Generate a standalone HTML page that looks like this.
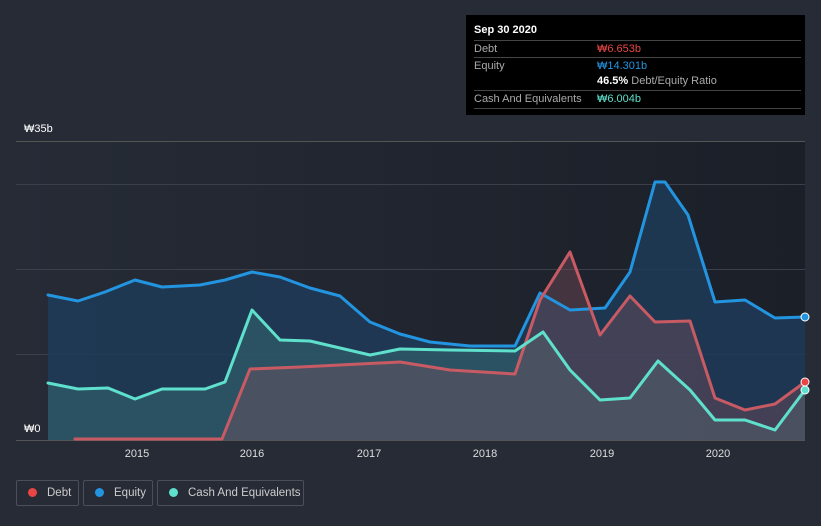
<!DOCTYPE html>
<html><head><meta charset="utf-8"><style>
html,body{margin:0;width:821px;height:526px;overflow:hidden}
body{background:#262b36;font-family:"Liberation Sans",sans-serif;position:relative}
.tip{position:absolute;left:466px;top:15px;width:339px;height:100px;background:#000;color:#fff;font-size:11px}
.tip .r{position:absolute;left:8px;right:4px;border-top:1px solid #444;height:17px;line-height:17px;color:#aaa;white-space:nowrap}
.leg{position:absolute;top:480px;height:26px;border:1px solid #4a4f5a;border-radius:2px;color:#ccc;font-size:11.5px;line-height:24px;box-sizing:border-box;white-space:nowrap;overflow:hidden}
.leg i{display:inline-block;width:9px;height:9px;border-radius:50%;margin:0 10px 0 11px;vertical-align:-1px}
</style></head><body>
<svg width="821" height="526" style="position:absolute;left:0;top:0">
<defs><linearGradient id="bg" x1="0" x2="1"><stop offset="0" stop-color="#262b36"/><stop offset="1" stop-color="#1b1f28"/></linearGradient></defs>
<rect x="16" y="141" width="789" height="299" fill="url(#bg)"/>
<g stroke="#3a3f4a" stroke-width="1"><line x1="16" y1="141.5" x2="805" y2="141.5" stroke="#555"/><line x1="16" y1="184.5" x2="805" y2="184.5"/><line x1="16" y1="269.5" x2="805" y2="269.5"/><line x1="16" y1="354.5" x2="805" y2="354.5"/><line x1="16" y1="440.5" x2="805" y2="440.5" stroke="#555"/></g>
<polygon fill="#1f3b58" fill-opacity=".85" points="48,295 78,301 105,292 135,280 162,287 200,285 225,280 252,272 280,277 310,288 340,296 370,322 400,334 430,342 470,346 515,346 540,293 570,310 605,308 630,272 655,182 665,182 688,215 715,302 745,300 775,318 805,317 805,440 48,440"/>
<polygon fill="#3a7478" fill-opacity=".45" points="48,383 78,389 108,388 135,399 162,389 205,389 225,382 252,310 280,340 310,341 340,348 370,355 400,349 450,350 515,351 543,332 570,370 600,400 630,398 658,361 690,390 715,420 745,420 775,430 805,390 805,440 48,440"/>
<polygon fill="#7a5060" fill-opacity=".4" points="75,439 222,439 250,369 300,367 400,362 450,370 515,374 540,300 570,252 600,335 630,296 655,322 690,321 715,398 745,410 775,404 805,382 805,440 75,440"/>
<g fill="none" stroke-width="3" stroke-linejoin="round" stroke-linecap="round">
<polyline stroke="#2394df" points="48,295 78,301 105,292 135,280 162,287 200,285 225,280 252,272 280,277 310,288 340,296 370,322 400,334 430,342 470,346 515,346 540,293 570,310 605,308 630,272 655,182 665,182 688,215 715,302 745,300 775,318 805,317"/>
<polyline stroke="#c85a64" points="75,439 222,439 250,369 300,367 400,362 450,370 515,374 540,300 570,252 600,335 630,296 655,322 690,321 715,398 745,410 775,404 805,382"/>
<polyline stroke="#5fe0cc" points="48,383 78,389 108,388 135,399 162,389 205,389 225,382 252,310 280,340 310,341 340,348 370,355 400,349 450,350 515,351 543,332 570,370 600,400 630,398 658,361 690,390 715,420 745,420 775,430 805,390"/>
</g>
<circle cx="805" cy="317" r="4" fill="#2394df" stroke="#fff"/><circle cx="805" cy="382" r="4" fill="#e84545" stroke="#fff"/><circle cx="805" cy="390" r="4" fill="#5fe0cc" stroke="#fff"/>
<g fill="#fff" font-size="11" font-family="Liberation Sans"><text x="24" y="132">₩35b</text><text x="24" y="432">₩0</text>
<g text-anchor="middle" fill="#ddd"><text x="137" y="457">2015</text><text x="252" y="457">2016</text><text x="369" y="457">2017</text><text x="485" y="457">2018</text><text x="602" y="457">2019</text><text x="718" y="457">2020</text></g></g>
</svg>
<div class="tip">
<div style="position:absolute;left:8px;top:9px;font-weight:bold;font-size:11px">Sep 30 2020</div>
<div class="r" style="top:25px">Debt<span style="position:absolute;left:123px;color:#e84545">₩6.653b</span></div>
<div class="r" style="top:42px">Equity<span style="position:absolute;left:123px;color:#2394df">₩14.301b</span></div>
<div class="r" style="top:58px;border:0"><span style="position:absolute;left:123px"><b style="color:#fff">46.5%</b> Debt/Equity Ratio</span></div>
<div class="r" style="top:75px;border-bottom:1px solid #444">Cash And Equivalents<span style="position:absolute;left:123px;color:#5fe0cc">₩6.004b</span></div>
</div>
<div class="leg" style="left:16px;width:63px"><i style="background:#e84545"></i>Debt</div>
<div class="leg" style="left:83px;width:70px"><i style="background:#2394df"></i>Equity</div>
<div class="leg" style="left:157px;width:147px"><i style="background:#5fe0cc"></i>Cash And Equivalents</div>
</body></html>
